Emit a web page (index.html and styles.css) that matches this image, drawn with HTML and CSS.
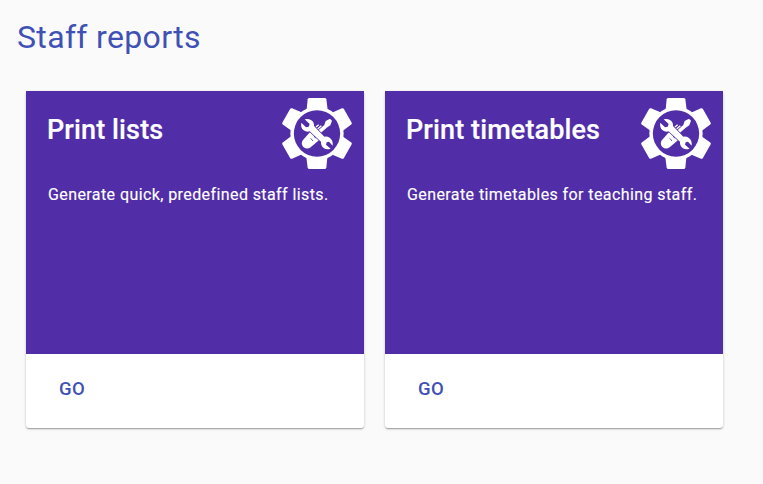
FILE: index.html
```html
<!DOCTYPE html>
<html lang="en">
<head>
<meta charset="utf-8">
<title>Staff reports</title>
<link rel="stylesheet" href="styles.css">
</head>
<body>
<svg width="0" height="0" class="sprite" aria-hidden="true">
  <symbol id="gear-tools" viewBox="18 18 210 213">
    <g fill="#fff">
      <g id="teeth">
        <path id="tooth" d="M91 62 L95 22 Q96 18 100 18 H146 Q150 18 151 22 L156 62Z"/>
        <use href="#tooth" transform="rotate(60 123 124.500)"/>
        <use href="#tooth" transform="rotate(120 123 124.500)"/>
        <use href="#tooth" transform="rotate(180 123 124.500)"/>
        <use href="#tooth" transform="rotate(240 123 124.500)"/>
        <use href="#tooth" transform="rotate(300 123 124.500)"/>
      </g>
      <circle cx="123" cy="124.500" r="80"/>
    </g>
    <circle cx="123" cy="124.500" r="69.500" fill="#512da8"/>
    <g fill="#fff">
      <path d="M162 80 L149 87 L145 99 L122 119 L130 127 L152 107 L163 100 L168 86Z"/>
      <path d="M107 115 L133 141 L104 166 Q93 174 82 165 Q73 155 81 144Z"/>
      <path d="M119 106 L128 98 M124 112 L136 101 M130 118 L142 107" stroke="#fff" stroke-width="4"/>
      <path d="M119 139 L114 131 M111 147 L104 139" stroke="#512da8" stroke-width="2.500"/>
      <path stroke="#512da8" stroke-width="4" paint-order="stroke" d="M86 82 L101 96 L98 104 L90 106 L76 92 Q73 107 83 115 Q91 121 101 118 L135 149 Q134 161 144 169 Q152 174 164 170 L150 158 L152 151 L159 149 L170 161 Q172 145 161 137 Q153 132 145 134 L114 102 Q115 91 106 85 Q97 79 86 82Z"/>
    </g>
  </symbol>
</svg>
<main class="page">
  <h1 class="page-title">Staff reports</h1>
  <div class="cards">
    <article class="card">
      <div class="card-body">
        <header class="card-header">
          <h2 class="card-title">Print lists</h2>
          <svg class="card-icon"><use href="#gear-tools"/></svg>
        </header>
        <p class="card-text">Generate quick, predefined staff lists.</p>
      </div>
      <footer class="card-actions"><button class="go">GO</button></footer>
    </article>
    <article class="card">
      <div class="card-body">
        <header class="card-header">
          <h2 class="card-title">Print timetables</h2>
          <svg class="card-icon"><use href="#gear-tools"/></svg>
        </header>
        <p class="card-text">Generate timetables for teaching staff.</p>
      </div>
      <footer class="card-actions"><button class="go">GO</button></footer>
    </article>
  </div>
</main>
</body>
</html>
```
FILE: styles.css
```css
* { box-sizing: border-box; }
body { margin: 0; background: #fafafa; font-family: Roboto, "Liberation Sans", sans-serif; }
.sprite { display: block; }
.page { padding: 17px 16px; }
.page-title { margin: 0 0 34px 1px; font-size: 32px; line-height: 40px; font-weight: 400; letter-spacing: 0.34px; color: #3f51b5; }
.cards { display: flex; gap: 21px; margin-left: 10px; }
.card {
  display: flex; flex-direction: column; flex: none;
  width: 338px; height: 337px; background: #fff; border-radius: 3px;
  box-shadow: 0 1px 3px rgba(0,0,0,.2), 0 1px 1px rgba(0,0,0,.14), 0 2px 1px -1px rgba(0,0,0,.12);
}
.card-body { height: 263px; padding: 7px 12px 0 21px; background: #512da8; color: #fff; }
.card-header { display: flex; justify-content: space-between; height: 71px; }
.card-title { margin: 16px 0 0; font-size: 27px; line-height: 32px; font-weight: 500; letter-spacing: 0.12px; -webkit-text-stroke: 0.2px; }
.card-icon { width: 70px; height: 71px; }
.card-text { margin: 14px 0 0 1px; font-size: 16px; line-height: 24px; letter-spacing: 0.41px; white-space: nowrap; -webkit-text-stroke: 0.15px; }
.card-actions { display: flex; align-items: center; height: 74px; padding: 0 33px 5px; }
.go { padding: 0; border: 0; background: none; font: 500 18.5px/24px Roboto, sans-serif; letter-spacing: 0.5px; color: #3f51b5; }
```
